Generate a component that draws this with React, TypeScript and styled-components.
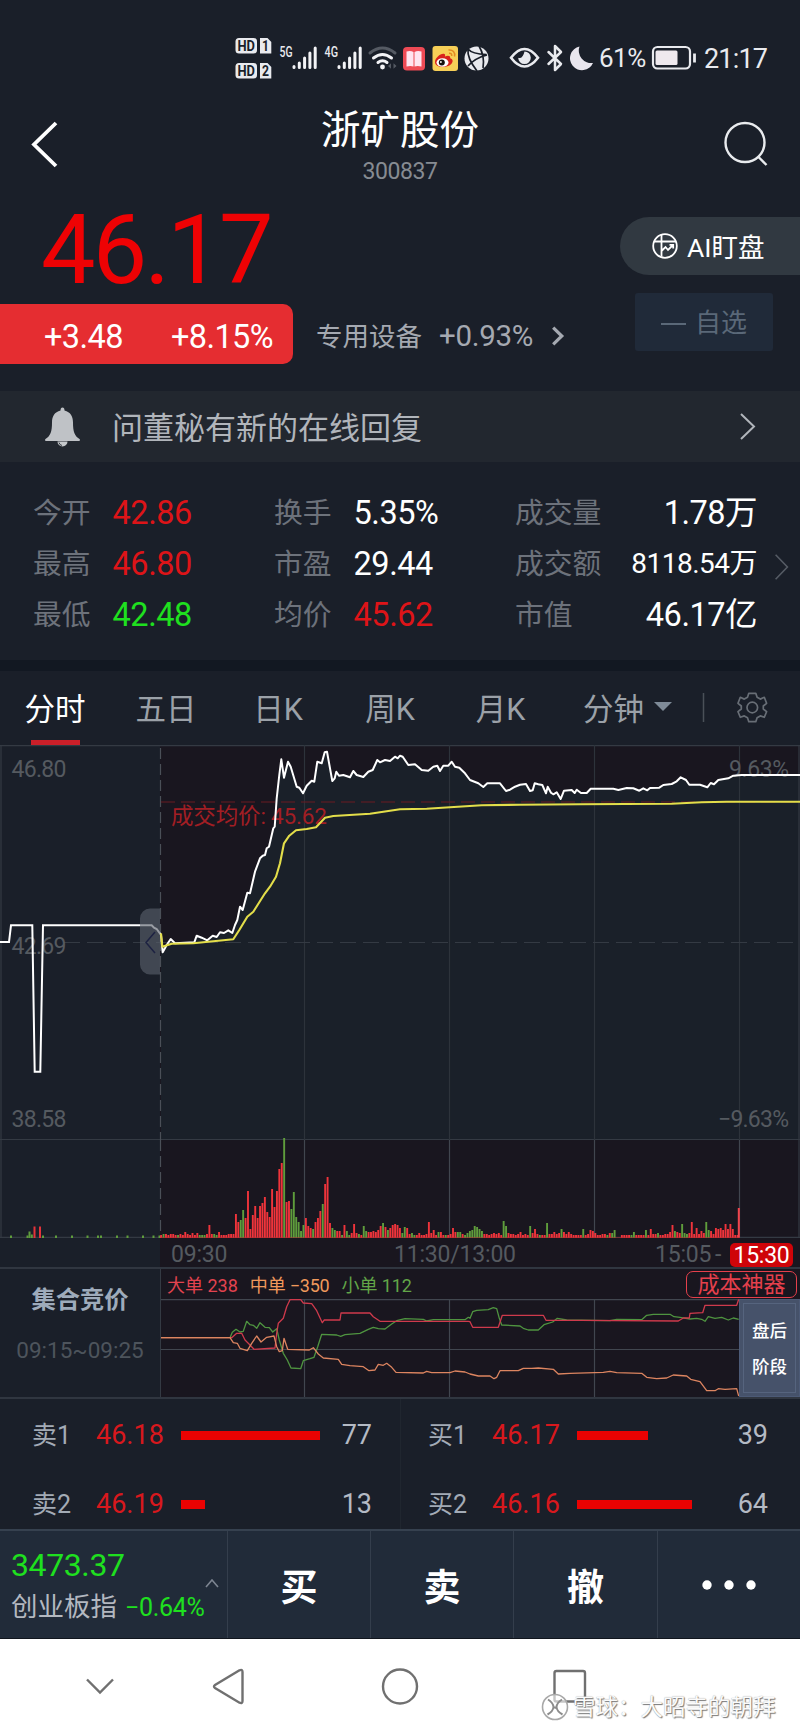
import React from "react";
import styled, { createGlobalStyle } from "styled-components";

const GlobalStyle = createGlobalStyle`
  * { box-sizing: border-box; }
  body { margin: 0; background: #1a1f29; }
`;

const ink = {
  bg: "#1a1f29",
  plot: "#19161f",
  grid: "#343a43",
  red: "#dd1418",
  green: "#1fe01f",
  label: "#6d727b",
  dim: "#555a60",
};

const Screen = styled.main`
  width: 800px;
  height: 1733px;
  display: flex;
  flex-direction: column;
  background: ${ink.bg};
  color: #fff;
  font-family: Roboto, "Noto Sans CJK SC", sans-serif;
  white-space: nowrap;
  overflow: hidden;
  & > * { flex-shrink: 0; }
`;

const Txt = styled.span<{ $size: number; $color?: string; $weight?: number; $track?: number }>`
  font-size: ${(p) => p.$size}px;
  line-height: 1.2;
  color: ${(p) => p.$color ?? "#fff"};
  font-weight: ${(p) => p.$weight ?? 400};
  letter-spacing: ${(p) => p.$track ?? 0}px;
`;

const Drawing = styled.svg`
  display: block;
  flex: none;
`;

/* ---------- status bar ---------- */

const StatusBar = styled.header`
  display: flex;
  align-items: flex-start;
  height: 92px;
  padding: 37px 0 0 235px;
`;

const Clock = styled(Txt)`
  margin: 6px 0 0 7px;
`;

const Percent = styled(Txt)`
  width: 50px;
  margin: 6px 2px 0 0;
`;

const StatusIcons = () => (
  <Drawing width="364" height="44" viewBox="235 37 364 44">
    <g fill="#e9eaee">
      <rect x="235.5" y="38" width="21.5" height="15.5" rx="3.5" />
      <path d="M260 38h7.5l3.8 4v11.5h-11.3z" />
      <rect x="235.5" y="63" width="21.5" height="15.5" rx="3.5" />
      <path d="M260 63h7.5l3.8 4v11.5h-11.3z" />
    </g>
    <g fill="#1a1f29" fontFamily="Roboto" fontWeight="700" fontSize="14">
      <text x="237.5" y="50.8" textLength="17.5" lengthAdjust="spacingAndGlyphs">HD</text>
      <text x="262" y="50.8" textLength="7" lengthAdjust="spacingAndGlyphs">1</text>
      <text x="237.5" y="75.8" textLength="17.5" lengthAdjust="spacingAndGlyphs">HD</text>
      <text x="262" y="75.8" textLength="7" lengthAdjust="spacingAndGlyphs">2</text>
    </g>
    <g fill="#e9eaee" fontFamily="Roboto" fontWeight="500" fontSize="15">
      <text x="279.5" y="57" textLength="13" lengthAdjust="spacingAndGlyphs">5G</text>
      <text x="324.5" y="57" textLength="13.5" lengthAdjust="spacingAndGlyphs">4G</text>
    </g>
    <g stroke="#f3f3f6" strokeWidth="3" strokeLinecap="round">
      {[294, 339].map((x) => (
        <path key={x} d={`M${x} 66.5v1M${x + 5.3} 63v4.5M${x + 10.6} 58v9.5M${x + 15.9} 53v14.5M${x + 21.2} 48v19.5`} />
      ))}
    </g>
    <g fill="none" strokeLinecap="round">
      <path d="M370 53q12.5-10 25 0" stroke="#555a63" strokeWidth="3" />
      <path d="M373.5 58q9-7 18 0M378 62.5q4.5-3.500 9 0" stroke="#f3f3f6" strokeWidth="3" />
    </g>
    <circle cx="382.5" cy="67" r="2.4" fill="#f3f3f6" />
    <path d="M388 66l3-2.800v5.6zM396.5 66l-3-2.800v5.6z" fill="#555a63" />
    <rect x="403" y="47" width="22" height="23.5" rx="4" fill="#ee4a55" />
    <path d="M406.5 51.5q4-1.500 7 .6v14.5q-3-1-7 0zM421.5 51.5q-4-1.500-7 .6v14.5q3-1 7 0z" fill="#ffe4f0" />
    <rect x="432.5" y="46" width="25.5" height="25" rx="3" fill="#f7cf57" />
    <path d="M435 62c0-4.500 6.500-9.500 9.500-8 .8.5.7 1.700.4 2.400 3-1.200 5.600-1 5.300 1.800 3.200 1 3 3.800.8 6-4 4-16 4-16-2.200z" fill="#d9221c" />
    <ellipse cx="442.5" cy="62.5" rx="6" ry="4.3" fill="#fff" />
    <circle cx="441.8" cy="62.6" r="3" fill="#17120f" />
    <circle cx="440.9" cy="62" r="0.9" fill="#fff" />
    <path d="M448.5 50c4.300-.5 7 2.500 6 6.500M449 53.2c2-.2 3 .9 2.700 2.800" stroke="#e38a22" strokeWidth="1.5" fill="none" />
    <circle cx="476.5" cy="58.5" r="12" fill="#e9eaee" />
    <path d="M468 49q4 5 18.500 5.500M479 46q6 10 4 22M487 55q-12 3-19 11M468 50q-1 8 9 21" stroke="#1a1f29" strokeWidth="1.7" fill="none" />
    <path d="M511 57.8q13.500-17.500 27 0q-13.500 17.500-27 0z" fill="none" stroke="#e9eaee" strokeWidth="2.6" />
    <path d="M524.5 51.5a6.300 6.300 0 1 1-6.300 6.300q4.500 1.500 6.300-6.300z" fill="#e9eaee" />
    <path d="M548.5 52l12.500 12-6 6v-24l6 6-12.500 12" fill="none" stroke="#e9eaee" strokeWidth="2.5" strokeLinejoin="round" strokeLinecap="round" />
    <path d="M579.500 46.500a12 12 0 1 0 13.500 16.500a12.500 12.500 0 0 1-13.500-16.500z" fill="#e9e6ee" />
  </Drawing>
);

const Battery = () => (
  <Drawing width="46" height="44" viewBox="651 37 46 44">
    <rect x="653" y="47" width="37" height="21.5" rx="4.5" fill="none" stroke="#e9eaee" strokeWidth="2.2" />
    <rect x="655.5" y="50.5" width="22" height="14.5" rx="1.5" fill="#efe9ee" />
    <path d="M694.5 53.5v9" stroke="#e9eaee" strokeWidth="2.8" />
  </Drawing>
);

/* ---------- title ---------- */

const TitleBar = styled.nav`
  display: grid;
  grid-template-columns: 100px 1fr 100px;
  height: 103px;
`;

const TitleText = styled.div`
  display: flex;
  flex-direction: column;
  align-items: center;
  padding-top: 15px;
  gap: 4px;
`;

/* ---------- quote ---------- */

const Quote = styled.section`
  display: flex;
  justify-content: space-between;
  height: 196px;
`;

const QuoteLeft = styled.div`
  display: flex;
  flex-direction: column;
`;

const BigPrice = styled.div`
  height: 109px;
  padding: 1px 0 0 41px;
  font-size: 97px;
  line-height: 109px;
  letter-spacing: -2.8px;
  color: #ee0204;
`;

const ChangeRow = styled.div`
  display: flex;
  align-items: center;
  height: 60px;
`;

const ChangeBadge = styled.div`
  display: flex;
  align-items: center;
  justify-content: space-between;
  width: 293px;
  height: 60px;
  padding: 6px 20px 0 44px;
  border-radius: 0 10px 10px 0;
  background: #e52d31;
`;

const Sector = styled.div`
  display: flex;
  align-items: center;
  gap: 17px;
  padding: 5px 0 0 23px;
`;

const QuoteRight = styled.div`
  display: flex;
  flex-direction: column;
  align-items: flex-end;
  gap: 18px;
  padding-top: 22px;
`;

const AiPill = styled.button`
  display: flex;
  align-items: center;
  gap: 9px;
  width: 180px;
  height: 58px;
  padding: 0 0 0 32px;
  border: 0;
  border-radius: 29px 0 0 29px;
  background: #313941;
  color: inherit;
  font-family: inherit;
`;

const PillText = styled(Txt)`
  padding-top: 4px;
`;

const WatchButton = styled.button`
  display: flex;
  align-items: center;
  gap: 9px;
  width: 138px;
  height: 58px;
  margin-right: 27px;
  padding: 4px 0 0 26px;
  border: 0;
  border-radius: 3px;
  background: #202a39;
  font-family: inherit;
`;

const Dash = styled.i`
  width: 25px;
  height: 2px;
  background: #5a6878;
`;

/* ---------- notice ---------- */

const Notice = styled.section`
  display: flex;
  align-items: center;
  height: 71px;
  padding: 0 44px;
  background: #22272f;
`;

const NoticeText = styled(Txt)`
  flex: 1;
  margin-left: 31px;
  padding-top: 4px;
`;

/* ---------- statistics ---------- */

const Stats = styled.section`
  display: flex;
  align-items: center;
  height: 198px;
  padding: 6px 12px 0 33px;
`;

const StatsGrid = styled.div`
  display: grid;
  grid-template-columns: 241px 241px 242px;
  grid-auto-rows: 51px;
`;

const Stat = styled.div<{ $spread?: boolean }>`
  display: flex;
  align-items: center;
  justify-content: ${(p) => (p.$spread ? "space-between" : "flex-start")};
  gap: ${(p) => (p.$spread ? 0 : 22)}px;
`;

const StatsMore = styled.div`
  display: flex;
  padding: 5px 0 0 17px;
`;

const Separator = styled.hr`
  width: 100%;
  height: 11px;
  margin: 0;
  border: 0;
  background: #121822;
`;

/* ---------- tabs ---------- */

const Tabs = styled.nav`
  display: grid;
  grid-template-columns: 110px 112px 112px 112px 109px 145px 100px;
  height: 74px;
`;

const Tab = styled.div<{ $active?: boolean }>`
  position: relative;
  display: flex;
  align-items: center;
  justify-content: center;
  gap: 10px;
  padding: 0 0 3px;
  font-size: 30.5px;
  color: ${(p) => (p.$active ? "#fff" : "#9ba1a8")};
  &::after {
    content: "";
    display: ${(p) => (p.$active ? "block" : "none")};
    position: absolute;
    left: 31px;
    bottom: 0;
    width: 49px;
    height: 5px;
    background: #cb1f29;
  }
`;

const TabTools = styled.div`
  display: flex;
  align-items: center;
`;

/* ---------- time axis ---------- */

const TimeAxis = styled.div`
  display: grid;
  grid-template-columns: 394px 1fr 54px 21px auto;
  align-items: center;
  height: 29px;
  padding: 4px 7px 0 0;
  background: linear-gradient(to right, ${ink.bg} 160px, ${ink.plot} 160px);
`;

const AxisTime = styled.span<{ $inset?: number }>`
  padding: 1px 0 0 ${(p) => p.$inset ?? 0}px;
  font-size: 23px;
  line-height: 24px;
  letter-spacing: -0.2px;
  color: ${ink.dim};
`;

const CloseTag = styled.span`
  width: 63px;
  height: 24px;
  border-radius: 5px;
  background: #cf0409;
  color: #fff;
  font-size: 23px;
  line-height: 25px;
  text-align: center;
  letter-spacing: -0.3px;
`;

/* ---------- order flow ---------- */

const FlowPanel = styled.section`
  display: grid;
  grid-template-columns: 161px 1fr;
  height: 132px;
  border-top: 2px solid #303640;
  border-bottom: 2px solid #303640;
`;

const Auction = styled.div`
  display: flex;
  flex-direction: column;
  align-items: center;
  gap: 23px;
  padding-top: 16px;
  border-right: 1px solid ${ink.grid};
`;

const FlowBody = styled.div`
  display: flex;
  flex-direction: column;
  background: ${ink.plot};
`;

const Legend = styled.div`
  display: flex;
  align-items: center;
  gap: 12px;
  height: 30px;
  padding: 0 3px 0 6px;
`;

const LegendItem = styled(Txt)`
  padding-top: 4px;
`;

const CostTool = styled.button`
  width: 111px;
  height: 27px;
  margin-left: auto;
  padding: 0;
  border: 1.5px solid #e5404c;
  border-radius: 7px;
  background: none;
  color: #e5404c;
  font-family: inherit;
  font-size: 22px;
  line-height: 25px;
`;

const FlowPlot = styled.div`
  display: flex;
  height: 98px;
`;

const AfterHours = styled.div`
  display: flex;
  flex-direction: column;
  align-items: center;
  justify-content: center;
  gap: 15px;
  width: 61px;
  padding-top: 2px;
  background: #46526a;
  border: 1px solid #4c5a76;
  outline: 1px solid #56647e;
  outline-offset: -5px;
`;

/* ---------- order book ---------- */

const Book = styled.section`
  display: grid;
  grid-template-columns: 400px 400px;
  grid-auto-rows: 69px;
  height: 130px;
  overflow: hidden;
`;

const BookRow = styled.div<{ $right?: boolean }>`
  display: grid;
  grid-template-columns: 64px 85px 1fr 50px;
  align-items: center;
  padding: ${(p) => (p.$right ? "4px 32px 0 27px" : "4px 28px 0 31px")};
  border-left: 1px solid ${(p) => (p.$right ? "#20262f" : "transparent")};
`;

const Depth = styled.div`
  height: 9px;
  margin-bottom: 1px;
  background: #ea0202;
`;

const Qty = styled(Txt)`
  text-align: right;
`;

/* ---------- trade bar ---------- */

const TradeBar = styled.section`
  display: grid;
  grid-template-columns: 228px 143px 143px 144px 142px;
  height: 110px;
  border-top: 2px solid #36414f;
  border-bottom: 1px solid #10151d;
  background: #212b39;
`;

const IndexCell = styled.div`
  display: flex;
  align-items: center;
  justify-content: space-between;
  padding: 0 9px 0 11px;
  border-right: 1px solid #343e4c;
`;

const IndexText = styled.div`
  display: flex;
  flex-direction: column;
  gap: 6px;
`;

const IndexChange = styled.div`
  display: flex;
  align-items: baseline;
  gap: 8px;
`;

const TradeCell = styled.div`
  display: flex;
  align-items: center;
  justify-content: center;
  border-right: 1px solid #343e4c;
  font-size: 37px;
  font-weight: 700;
  &:last-child { border-right: 0; }
`;

/* ---------- system navigation ---------- */

const SystemNav = styled.footer`
  position: relative;
  height: 94px;
  background: #fff;
`;

const Watermark = styled.div`
  position: absolute;
  left: 541px;
  top: 53px;
  display: flex;
  align-items: center;
  gap: 4px;
  font-size: 22.5px;
  line-height: 30px;
  color: #fbfbfb;
  text-shadow: 1px 1px 1px #777, 0 0 1px #999;
`;

/* ---------- chart data ---------- */

/** Traces are sampled at three units per pixel, relative to an origin. */
const trace = (ox: number, oy: number, data: string) =>
  data
    .trim()
    .split(/\s+/)
    .map((pair) => {
      const [x, y] = pair.split(",").map(Number);
      return `${(ox + x / 3).toFixed(1)},${(oy + y / 3).toFixed(1)}`;
    })
    .join(" ");

const preOpen = trace(0, 665, "0,831 27,831 33,781 97,781 104,1220 121,1220 129,781 455,781 462,788 470,792 483,810");

const price =
  trace(0, 665, `483,810 488,862 500,840 512,822 525,835 583,832 590,812 605,818 622,826 638,812 650,816 660,802 672,804
  685,796 697,804 705,780 712,765 720,725 728,735 742,683 750,685 765,620 780,580 788,572 795,570 800,550 807,545
  820,490 824,485 830,400 838,330 844,283 852,338 864,290 872,305 890,365 898,368 909,385 920,362 935,347 943,350
  952,290 965,295 974,262 981,260 997,348 1004,340 1009,320 1017,332 1030,330 1050,337 1060,318 1070,330 1090,336
  1105,320 1118,315 1132,285 1140,292 1155,285 1170,288 1185,275 1193,280`) +
  " " +
  trace(400, 665, `0,272 8,275 25,300 45,298 65,315 85,317 100,305 112,302 120,318 130,302 145,302 155,290 165,305 178,308
  195,325 210,345 235,355 250,366 262,355 300,355 318,378 330,374 345,365 360,359 378,357 390,378 398,376 404,355
  415,358 427,360 438,385 443,365 453,383 460,388 470,382 482,402 492,377 515,375 524,384 530,374 543,384 560,384
  572,371 640,371 655,375 680,369 700,370 718,377 730,370 742,376 750,369 778,368 790,360 815,357 830,349 842,337
  858,345 868,359 900,359 922,367 932,354 942,358 955,345 985,340 1000,332 1025,330 1200,330`);

const average =
  trace(0, 665, `483,805 487,845 515,836 580,835 700,823 718,795 742,755 760,740 795,685 810,665 828,635 840,595 852,535
  868,512 888,496 920,492 948,487 975,458 1000,453 1110,446`) +
  " " +
  trace(400, 665, "0,433 80,431 150,427 245,421 360,419 540,418 815,416 905,412 980,410 1200,410");

const flowGreen =
  trace(150, 1120, `30,653 240,653 247,637 258,628 270,636 280,634 290,604 300,614 310,616 320,625 330,608 345,622 358,623
  368,636 380,626 388,660 400,700 412,720 423,744 452,746 460,722 480,716 492,712 503,680 515,643 560,645 572,649
  585,644 630,640 655,628 670,622 685,626 705,627 725,612 740,602 765,596 820,598 830,603 850,599 945,599 955,592`) +
  " " +
  trace(470, 1120, `0,595 8,575 20,571 55,569 70,563 80,566 88,595 95,615 150,618 160,625 175,630 205,630 222,614 248,606
  262,595 290,600 420,602 440,598 515,599 530,586 550,583 600,583 612,590 630,592 660,597 680,595 695,598 705,604
  715,590 735,595 755,592 775,600 790,594 806,598`);

const flowRed =
  trace(150, 1120, `30,653 245,653 260,640 275,640 285,660 300,675 312,688 375,684 380,640 385,610 400,595 410,560 420,539
  452,539 460,549 485,551 500,572 517,608 523,600 570,600 573,579 660,579 670,590 690,604 955,604`) +
  " " +
  trace(470, 1120, `0,605 8,622 85,622 97,586 220,586 228,601 330,601 625,603 640,594 658,594 660,580 698,578 705,556
  800,556 806,538`);

const flowOrange =
  trace(150, 1120, `30,653 240,653 250,668 262,670 270,685 292,692 305,670 320,648 333,666 350,652 372,648 380,680 388,695
  397,692 402,655 413,688 478,690 490,683 505,702 520,714 565,718 575,733 600,737 640,740 657,752 675,750 685,733
  700,736 710,730 725,742 738,757 820,759 830,754 845,758 900,758 915,753 945,756`) +
  " " +
  trace(470, 1120, `0,762 25,768 60,768 72,776 80,772 90,752 145,752 160,745 185,745 205,744 250,748 265,762 300,760 400,757
  420,754 440,758 515,760 530,772 560,776 590,774 610,765 650,768 662,778 690,785 710,812 735,812 745,806 765,808
  800,806 806,828`);

/** One entry per minute: height in pixels, suffixed with "g" when the price fell. */
const volume = `3 4g 4 3 4 4 3 3g 4 3 6 4 3 5 3 5 3g 3g 3g 4 13 4 4g 3g 6 3 3 3 4 4 4 24 16 18g 28g 20 47 9 23 32 20 32 35 41
26 21 49 31 47 69 75 100g 36 37 29g 46g 21g 16g 7g 13g 20 12 10 9g 16 20 27 34g 54 61 15 10g 8g 7 7 3g 13 7g 3g 5 14 5
4g 3 12g 7g 6 6 7 6 8 12 15g 11 8g 10 13 14 13 10 5g 11g 10 4 5g 3g 3 5 3 3 4 16 5 8 3 6g 6 3 3g 3 4 10 6 6g 6g 4 3g
5g 7g 8g 12g 11g 9g 7g 4 4 3 4 5 4 5 3 17g 12g 5 4 4 3 4 6 3 4 3 12g 5 9 4 3g 3 3 15g 4 4 6 4 5 9g 6 4 6 4 3 3
3 3 9g 3 4 8 7 5 3 3 4 4 3g 5 5g 8g 0 0 3 3 3 3 3g 6g 3 3 3 3 8g 3 9 4 4 5g 3 3 4 4 6 13 7g 6 5 14g 5g 4g 5 16 4
10 4 7 5 16g 8g 7 4 10 9 10 8 14 9 14 9 3 3`
  .split(/\s+/)
  .map((v) => ({ h: parseInt(v, 10), up: !v.endsWith("g") }));

const auctionVolume: [number, number, boolean][] = [
  [10, 3, false], [26.5, 3, false], [28.5, 7, false], [30.8, 4, false], [33.5, 12, true], [39, 12, true], [42, 3, false],
  [55, 3, false], [71, 3, false], [86.5, 3, false], [97, 3, false], [100, 3, false], [116, 3, false], [126.5, 3, false],
  [142, 3, false], [152.5, 3, false], [158.5, 3, false],
];

const columns = [304.5, 449.5, 594.5, 739.5];

const PriceChart = () => (
  <Drawing width="800" height="395" viewBox="0 745 800 395">
    <rect x="160" y="745" width="640" height="395" fill={ink.plot} />
    <polygon points={`${price} 800,1140 161,1140`} fill="#1a2029" />
    <g stroke={ink.grid} strokeWidth="1.2" fill="none">
      <path d="M0 745.6H800M1 745V1140M799 745V1140M0 1139.5H800" />
      {columns.map((x) => (
        <path key={x} d={`M${x} 745V1140`} stroke="#2d333b" />
      ))}
      <path d="M160.5 748V1140" strokeDasharray="11 5" stroke="#4a4f57" />
      <path d="M64 942.5H800" strokeDasharray="16 7" />
    </g>
    <path d="M161 802H800" stroke="#6b1a22" strokeWidth="1.2" strokeDasharray="14 6" />
    <g fill={ink.dim} fontFamily="Roboto" fontSize="23">
      <text x="11.5" y="777" textLength="55">46.80</text>
      <text x="11.5" y="953.5" textLength="55">42.69</text>
      <text x="11.5" y="1127" textLength="55">38.58</text>
      <text x="729" y="777" textLength="60">9.63%</text>
      <text x="718" y="1127" textLength="71">−9.63%</text>
    </g>
    <text x="171" y="823.5" fill="#a21e24" fontFamily="Roboto, 'Noto Sans CJK SC'" fontSize="22.5" textLength="156">
      成交均价: 45.62
    </text>
    <polyline points={preOpen} fill="none" stroke="#fff" strokeWidth="2" />
    <polyline points={price} fill="none" stroke="#fff" strokeWidth="2" strokeLinejoin="round" />
    <polyline points={average} fill="none" stroke="#e3de4a" strokeWidth="2.1" strokeLinejoin="round" />
    <path d="M160 908.5h-10a10 10 0 0 0-10 10v46a10 10 0 0 0 10 10h10z" fill="#5a616c" fillOpacity="0.62" />
    <path d="M155 932l-9 10.5 9 10.5" fill="none" stroke="#1d2242" strokeWidth="1.5" />
  </Drawing>
);

const VolumeChart = () => (
  <Drawing width="800" height="98" viewBox="0 1140 800 98" overflow="visible">
    <rect x="160" y="1140" width="640" height="98" fill={ink.plot} />
    <g stroke={ink.grid} strokeWidth="1.2">
      <path d="M1 1140V1238M799 1140V1238M0 1237.4H800" />
      {columns.map((x) => (
        <path key={x} d={`M${x} 1140V1238`} stroke="#41464f" />
      ))}
      <path d="M160.5 1140V1238" strokeDasharray="11 5" stroke="#4a4f57" />
    </g>
    {auctionVolume.map(([x, h, up]) => (
      <rect key={x} x={x} y={1238.5 - h} width="2" height={h} fill={up ? "#e5333a" : "#5f9d3c"} />
    ))}
    {volume.map(({ h, up }, i) => (
      <rect key={i} x={160.2 + i * 2.412} y={1238 - h} width="1.9" height={h} fill={up ? "#f0343b" : "#5f9d3c"} />
    ))}
    <rect x="737.8" y="1208" width="2" height="30" fill="#f0444c" />
    <path d="M161 1238H740" stroke="#b3262d" strokeWidth="1" />
  </Drawing>
);

const FlowChart = () => (
  <Drawing width="578" height="98" viewBox="161 1299 578 98">
    <g stroke="#41464f" strokeWidth="1.2">
      <path d="M161 1299.6H740M161 1349.5H740" />
      {columns.slice(0, 3).map((x) => (
        <path key={x} d={`M${x} 1299V1398`} />
      ))}
    </g>
    <g fill="none" strokeWidth="1.3" strokeLinejoin="round">
      <polyline points={flowGreen} stroke="#4f9440" />
      <polyline points={flowRed} stroke="#cf3a4c" />
      <polyline points={flowOrange} stroke="#dd8560" />
    </g>
  </Drawing>
);

const Chevron = ({ w, h, stroke, color }: { w: number; h: number; stroke: number; color: string }) => (
  <Drawing width={w} height={h}>
    <path
      d={`M${stroke} ${stroke / 2}L${w - stroke} ${h / 2}L${stroke} ${h - stroke / 2}`}
      fill="none"
      stroke={color}
      strokeWidth={stroke}
    />
  </Drawing>
);

interface StatItem {
  label: string;
  value: string;
  color?: string;
  size?: number;
}

const stats: StatItem[] = [
  { label: "今开", value: "42.86", color: ink.red },
  { label: "换手", value: "5.35%" },
  { label: "成交量", value: "1.78万" },
  { label: "最高", value: "46.80", color: ink.red },
  { label: "市盈", value: "29.44" },
  { label: "成交额", value: "8118.54万", size: 28 },
  { label: "最低", value: "42.48", color: ink.green },
  { label: "均价", value: "45.62", color: ink.red },
  { label: "市值", value: "46.17亿" },
];

const orders = [
  { side: "卖1", price: "46.18", width: 139, qty: 77 },
  { side: "买1", price: "46.17", width: 71, qty: 39 },
  { side: "卖2", price: "46.19", width: 24, qty: 13 },
  { side: "买2", price: "46.16", width: 115, qty: 64 },
];

export default function App() {
  return (
    <Screen>
      <GlobalStyle />
      <StatusBar>
        <StatusIcons />
        <Percent $size={26} $color="#e9eaee" $track={-0.5}>61%</Percent>
        <Battery />
        <Clock $size={27} $color="#e9eaee" $track={-0.8}>21:17</Clock>
      </StatusBar>

      <TitleBar>
        <Drawing width="100" height="103" viewBox="0 92 100 103">
          <path d="M56 123L34 144.500L56 166" fill="none" stroke="#fff" strokeWidth="3.8" />
        </Drawing>
        <TitleText>
          <Txt $size={39.5} $weight={400}>浙矿股份</Txt>
          <Txt $size={23} $color="#868b92" $track={-0.4}>300837</Txt>
        </TitleText>
        <Drawing width="100" height="103" viewBox="700 92 100 103">
          <circle cx="745" cy="142.5" r="19.5" fill="none" stroke="#e9ebee" strokeWidth="2.4" />
          <path d="M758.5 157l8 8" stroke="#e9ebee" strokeWidth="2.4" />
        </Drawing>
      </TitleBar>

      <Quote>
        <QuoteLeft>
          <BigPrice>46.17</BigPrice>
          <ChangeRow>
            <ChangeBadge>
              <Txt $size={32.5} $track={-0.6}>+3.48</Txt>
              <Txt $size={32.5} $track={-0.6}>+8.15%</Txt>
            </ChangeBadge>
            <Sector>
              <Txt $size={26.5} $color="#a5a9b1">专用设备</Txt>
              <Txt $size={29.5} $color="#a5a9b1" $track={-0.3}>+0.93%</Txt>
              <Chevron w={15} h={20} stroke={3.2} color="#a5a9b1" />
            </Sector>
          </ChangeRow>
        </QuoteLeft>
        <QuoteRight>
          <AiPill>
            <Drawing width="26" height="26" viewBox="0 0 26 26" fill="none" stroke="#fff" strokeWidth="1.8">
              <circle cx="13" cy="13" r="11.8" />
              <path d="M2 8.5H24M9.5 1.5V23.5M9.5 18l4-4 2.5 3 5-5M17.5 11.8h3.7v3.7" />
            </Drawing>
            <PillText $size={26.5}>AI盯盘</PillText>
          </AiPill>
          <WatchButton>
            <Dash />
            <Txt $size={26} $color="#5a6878">自选</Txt>
          </WatchButton>
        </QuoteRight>
      </Quote>

      <Notice>
        <Drawing width="37" height="40" viewBox="0 0 37 40">
          <path
            d="M18.5 0.5q2 0 2 3c6 1.500 8.500 6 8.500 12 0 9 1.500 13.500 6.500 16.500 1 .8.500 2-.5 2H2c-1 0-1.500-1.200-.5-2 5-3 6.500-7.500 6.500-16.500 0-6 2.500-10.500 8.500-12q0-3 2-3z"
            fill="#bfc2c6"
          />
          <path d="M13.5 34.5a5 5 0 0 0 10 0z" fill="#c5c8cb" />
          <path d="M15 35.5q.5 2.500 3 3" stroke="#3a3f47" fill="none" />
        </Drawing>
        <NoticeText $size={31} $color="#b1b5bb">问董秘有新的在线回复</NoticeText>
        <Chevron w={17} h={27} stroke={2} color="#b1b5bb" />
      </Notice>

      <Stats>
        <StatsGrid>
          {stats.map((s, i) => (
            <Stat key={s.label} $spread={i % 3 === 2}>
              <Txt $size={28.8} $color={ink.label}>{s.label}</Txt>
              <Txt $size={s.size ?? 32.5} $color={s.color} $track={-0.5}>{s.value}</Txt>
            </Stat>
          ))}
        </StatsGrid>
        <StatsMore>
          <Chevron w={15} h={26} stroke={1.6} color="#555b64" />
        </StatsMore>
      </Stats>

      <Separator />

      <Tabs>
        <Tab $active>分时</Tab>
        <Tab>五日</Tab>
        <Tab>日K</Tab>
        <Tab>周K</Tab>
        <Tab>月K</Tab>
        <Tab>
          分钟
          <Drawing width="18" height="9"><path d="M0 0H18L9 9z" fill="#7f8b98" /></Drawing>
        </Tab>
        <TabTools>
          <Drawing width="100" height="74" viewBox="700 671 100 74" fill="none">
            <path d="M703.5 693V722" stroke="#4a5058" strokeWidth="1.5" />
            <g transform="translate(752.3 707.5)" stroke="#686e76" strokeWidth="1.7" strokeLinejoin="round">
              <circle r="5.3" />
              <path d="M-3.500-14.200H3.500L4.800-10.200L8-8.400L12-10.200L14.300-4.200L11-1.500V1.500L14.300 4.200L12 9.800L8 8.400L4.800 10.200L3.500 14.200H-3.500L-4.800 10.200L-8 8.400L-12 9.800L-14.300 4.200L-11 1.500V-1.500L-14.300-4.200L-12-10.200L-8-8.400L-4.800-10.200Z" />
            </g>
          </Drawing>
        </TabTools>
      </Tabs>

      <PriceChart />
      <VolumeChart />

      <TimeAxis>
        <AxisTime $inset={171}>09:30</AxisTime>
        <AxisTime>11:30/13:00</AxisTime>
        <AxisTime>15:05</AxisTime>
        <AxisTime $inset={6}>-</AxisTime>
        <CloseTag>15:30</CloseTag>
      </TimeAxis>

      <FlowPanel>
        <Auction>
          <Txt $size={24.3} $weight={700} $color="#9eabbb">集合竞价</Txt>
          <Txt $size={22.5} $color="#4d545c">09:15~09:25</Txt>
        </Auction>
        <FlowBody>
          <Legend>
            <LegendItem $size={18} $color="#e2434f">大单 238</LegendItem>
            <LegendItem $size={18} $color="#f0995c" $track={-0.2}>中单 −350</LegendItem>
            <LegendItem $size={18} $color="#62a548" $track={-0.1}>小单 112</LegendItem>
            <CostTool>成本神器</CostTool>
          </Legend>
          <FlowPlot>
            <FlowChart />
            <AfterHours>
              <Txt $size={17.5} $weight={500}>盘后</Txt>
              <Txt $size={17.5} $weight={500}>阶段</Txt>
            </AfterHours>
          </FlowPlot>
        </FlowBody>
      </FlowPanel>

      <Book>
        {orders.map((o, i) => (
          <BookRow key={o.side} $right={i % 2 === 1}>
            <Txt $size={25} $color="#a3abb6">{o.side}</Txt>
            <Txt $size={27} $color="#d8181d">{o.price}</Txt>
            <Depth style={{ width: o.width }} />
            <Qty $size={27} $color="#b4bac4">{o.qty}</Qty>
          </BookRow>
        ))}
      </Book>

      <TradeBar>
        <IndexCell>
          <IndexText>
            <Txt $size={32} $color={ink.green} $track={-0.4}>3473.37</Txt>
            <IndexChange>
              <Txt $size={26.5} $color="#b3b8c0">创业板指</Txt>
              <Txt $size={25} $color={ink.green} $track={-0.3}>−0.64%</Txt>
            </IndexChange>
          </IndexText>
          <Drawing width="14" height="12">
            <path d="M1 8L7 1L13 8" fill="none" stroke="#7d8591" strokeWidth="1.6" />
          </Drawing>
        </IndexCell>
        <TradeCell>买</TradeCell>
        <TradeCell>卖</TradeCell>
        <TradeCell>撤</TradeCell>
        <TradeCell>
          <Drawing width="54" height="10" fill="#fff">
            <circle cx="5" cy="5" r="4.7" />
            <circle cx="27" cy="5" r="4.7" />
            <circle cx="49" cy="5" r="4.7" />
          </Drawing>
        </TradeCell>
      </TradeBar>

      <SystemNav>
        <Drawing width="800" height="94" viewBox="0 1639 800 94" fill="none" stroke="#707070" strokeWidth="2.4">
          <path d="M87 1679.5L100 1692.5L113 1679.5" />
          <path d="M239.500 1670.300L215 1685Q213 1686.500 215 1688L239.500 1702.700Q242.500 1704 242.500 1701V1672Q242.500 1669 239.500 1670.300Z" />
          <circle cx="400" cy="1686.5" r="17" />
          <rect x="554.5" y="1671" width="30.5" height="30.5" rx="2" />
        </Drawing>
        <Watermark>
          <Drawing width="28" height="28" viewBox="0 0 28 28" fill="none" overflow="visible">
            <circle cx="14" cy="14" r="12.5" fill="#ffffff" fillOpacity="0.6" stroke="#a8a8a8" strokeWidth="1.6" />
            <path d="M7 6.5q5 3 5.500 7.500-.5 4.500-6 7.500M21 6.5q-5 3-5.500 7.500.5 4.500 6 7.500M12 14l3.500 1" stroke="#8c8c8c" strokeWidth="2" />
          </Drawing>
          <span>雪球：大昭寺的朝拜</span>
        </Watermark>
      </SystemNav>
    </Screen>
  );
}
